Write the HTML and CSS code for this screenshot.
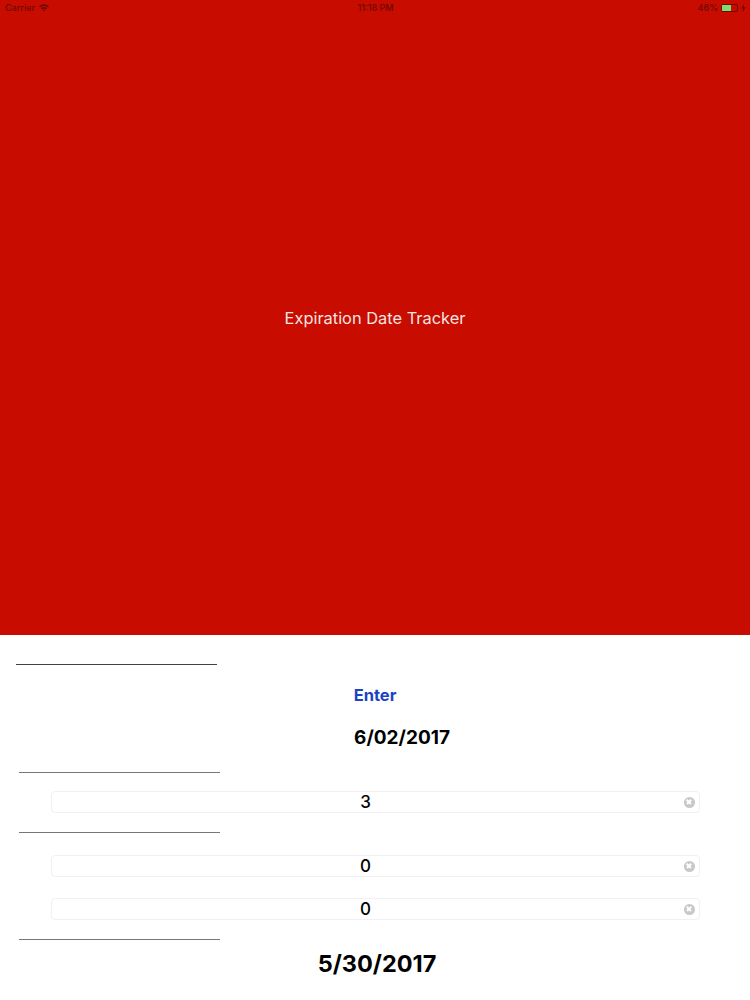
FILE: index.html
```html
<!DOCTYPE html>
<html lang="en">
<head>
  <meta charset="UTF-8">
  <meta name="viewport" content="width=device-width, initial-scale=1.0">
  <title>Expiration Date Tracker</title>
  <link rel="stylesheet" href="styles.css">
</head>

<body>
  <div class="hero">
    <div class="status-bar">
      <div class="status-left">
        <span>Carrier</span>
        <svg class="wifi" viewBox="0 0 10 8" width="10" height="8">
          <path d="M0 2.4 C3 -0.6 7 -0.6 10 2.4 L8.8 3.6 C6.5 1.5 3.5 1.5 1.2 3.6 Z"/>
          <path d="M2 4.3 C3.8 2.7 6.2 2.7 8 4.3 L6.9 5.4 C5.7 4.4 4.3 4.4 3.1 5.4 Z"/>
          <path d="M3.8 6.1 C4.5 5.6 5.5 5.6 6.2 6.1 L5 7.6 Z"/>
        </svg>
      </div>
      <div class="status-time">11:18 PM</div>
      <div class="status-right">
        <span>46%</span>
        <div class="battery"><div class="battery-level"></div></div>
        <svg class="charging" viewBox="0 0 5 8" width="5" height="8">
          <path d="M3 0 L0.4 4.5 H2.2 L1.8 8 L4.6 3.2 H2.7 Z"/>
        </svg>
      </div>
    </div>
    <div class="hero-title">Expiration Date Tracker</div>
  </div>

  <div class="content">
    <hr class="line line-first">
    <div class="enter">Enter</div>
    <div class="date-entered">6/02/2017</div>
    <hr class="line line-one">

    <div class="field field-one">
      <input type="text" value="3">
      <span class="clear"></span>
    </div>

    <hr class="line line-two">

    <div class="field field-two">
      <input type="text" value="0">
      <span class="clear"></span>
    </div>
    <div class="field field-three">
      <input type="text" value="0">
      <span class="clear"></span>
    </div>

    <hr class="line line-three">
    <div class="date-result">5/30/2017</div>
  </div>
</body>
</html>
```

FILE: styles.css
```css
body {
  font-family: Inter, "Liberation Sans", sans-serif;
  background-color: #fff;
  color: #000;
  margin: 0;
  height: 1000px;
  overflow: hidden;
}

/* top red panel */
.hero {
  position: relative;
  height: 635px;
  background-color: #c80c00;
  display: flex;
  align-items: center;
  justify-content: center;
}

.hero-title {
  color: #f6e4e0;
  font-size: 16.4px;
}

.status-bar {
  position: absolute;
  top: 0;
  left: 0;
  right: 0;
  height: 15px;
  padding: 0 4px 0 5px;
  display: grid;
  grid-template-columns: 1fr auto 1fr;
  align-items: center;
  color: #6e0a06;
  font-size: 9px;
  font-weight: 500;
}

.status-left {
  display: flex;
  align-items: center;
  gap: 4px;
}

.wifi, .charging {
  fill: #6e0a06;
}

.status-right {
  display: flex;
  align-items: center;
  justify-content: flex-end;
  gap: 3px;
}

.battery {
  width: 17px;
  height: 8px;
  border: 1px solid #6e0a06;
  border-radius: 2px;
  box-sizing: border-box;
}

.battery-level {
  width: 9px;
  height: 100%;
  background-color: #7fdc72;
}

/* bottom form */
.line {
  width: 201px;
  height: 1px;
  margin: 0 0 0 19px;
  border: none;
  background-color: #77767a;
}

.line-first {
  margin: 29px 0 0 16px;
  background-color: #444;
}

.enter {
  margin-top: 20px;
  height: 20px;
  line-height: 20px;
  text-align: center;
  color: #1a44c4;
  font-size: 16.5px;
  font-weight: 700;
}

.date-entered {
  margin: 21px 0 0 54px;
  height: 24px;
  line-height: 24px;
  text-align: center;
  font-size: 19px;
  font-weight: 700;
}

.line-one {
  margin-top: 22px;
}

.field {
  position: relative;
  margin: 0 50px 0 51px;
  height: 22px;
}

.field-one {
  margin-top: 18px;
}

.field-two {
  margin-top: 22px;
}

.field-three {
  margin-top: 21px;
}

.field input {
  display: block;
  width: 100%;
  height: 100%;
  box-sizing: border-box;
  padding: 0 20px 0 0;
  border: 1px solid #f1f0f2;
  border-radius: 4px;
  background-color: #fff;
  text-align: center;
  font-family: inherit;
  font-size: 17px;
  font-weight: 500;
  color: #000;
}

.clear {
  position: absolute;
  top: 5.5px;
  right: 5.5px;
  width: 11px;
  height: 11px;
  border-radius: 50%;
  background-color: #c8c8cb;
}

.clear::before, .clear::after {
  content: "";
  position: absolute;
  top: 4.75px;
  left: 2.5px;
  width: 6px;
  height: 1.5px;
  background-color: #fff;
  transform: rotate(45deg);
}

.clear::after {
  transform: rotate(-45deg);
}

.line-two {
  margin-top: 19px;
}

.line-three {
  margin-top: 19px;
}

.date-result {
  margin: 9px 0 0 4px;
  height: 30px;
  line-height: 30px;
  text-align: center;
  font-size: 23.5px;
  font-weight: 700;
}
```
